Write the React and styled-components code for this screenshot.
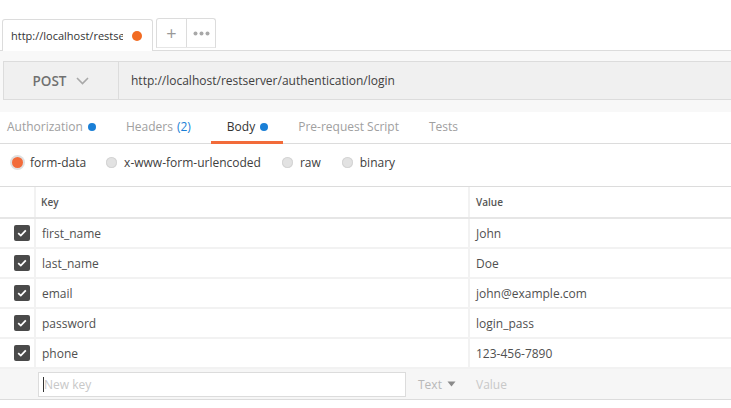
import React from 'react'
import styled, { createGlobalStyle } from 'styled-components'

const Global = createGlobalStyle`
  html, body { margin: 0; padding: 0; background: #fff; }
  body { font-family: "Open Sans", "Liberation Sans", sans-serif; color: #505050; }
  * { box-sizing: border-box; }
`

const Page = styled.div`
  width: 731px;
  height: 408px;
  overflow: hidden;
  background: #fff;
`

const TabStrip = styled.div`
  height: 51px;
  display: flex;
  align-items: flex-end;
  padding-left: 2px;
  gap: 3px;
  border-bottom: 1px solid #dcdcdc;
`

const RequestTab = styled.div`
  width: 151px;
  height: 32px;
  border: 1px solid #dcdcdc;
  border-bottom: none;
  border-radius: 3px 3px 0 0;
  display: flex;
  align-items: center;
  padding: 0 10px 0 8px;
  background: #fff;
  margin-bottom: -1px;
  font-size: 11px;
  color: #333;
`

const TabLabel = styled.span`
  width: 112px;
  overflow: hidden;
  white-space: nowrap;
`

const Dot = styled.span`
  width: ${p => p.size || 9}px;
  height: ${p => p.size || 9}px;
  border-radius: 50%;
  background: ${p => p.color};
  display: inline-block;
  flex-shrink: 0;
  margin-left: ${p => p.gap || 0}px;
`

const TabActions = styled.div`
  display: flex;
  height: 30px;
  margin-bottom: 2px;
  border: 1px solid #dcdcdc;
  border-bottom: 1px solid #e6e6e6;
  border-radius: 3px 3px 0 0;
`

const TabAction = styled.div`
  width: ${p => p.w}px;
  display: flex;
  align-items: center;
  justify-content: center;
  color: #999;
  font-size: 18px;
  & + & { border-left: 1px solid #dcdcdc; }
`

const UrlArea = styled.div`
  background: #f8f8f8;
  padding: 10px 0 12px 3px;
`

const UrlBar = styled.div`
  height: 39px;
  display: flex;
  border: 1px solid #dcdcdc;
  border-right: none;
  background: #f0f0f0;
`

const Method = styled.div`
  width: 115px;
  display: flex;
  align-items: center;
  justify-content: center;
  gap: 10px;
  border-right: 1px solid #dcdcdc;
  font-size: 13.5px;
  font-weight: 600;
  color: #707070;
`

const UrlText = styled.div`
  flex: 1;
  display: flex;
  align-items: center;
  padding-left: 12px;
  font-size: 12px;
  color: #404040;
`

const SubTabs = styled.div`
  height: 32px;
  display: flex;
  align-items: stretch;
  border-bottom: 1px solid #dcdcdc;
`

const SubTab = styled.div`
  display: flex;
  align-items: center;
  padding: 0 ${p => p.pr}px 0 ${p => p.pl}px;
  font-size: 12px;
  color: ${p => (p.active ? '#333' : '#a0a0a0')};
  border-bottom: 3px solid ${p => (p.active ? '#f26b3a' : 'transparent')};
  margin-bottom: -1px;
`

const Count = styled.span`
  color: #1a7fd6;
  margin-left: 4px;
`

const RadioRow = styled.div`
  height: 42px;
  display: flex;
  align-items: center;
  padding: 0 0 5px 12px;
  font-size: 12px;
  color: #404040;
`

const RadioItem = styled.label`
  display: flex;
  align-items: center;
  gap: 7px;
  margin-right: ${p => p.mr}px;
`

const RadioDot = styled.span`
  width: 11px;
  height: 11px;
  border-radius: 50%;
  background: ${p => (p.on ? '#f26b3a' : '#e2e2e2')};
  box-shadow: ${p => (p.on ? '0 0 0 2px #e0e0e0' : 'inset 0 0 0 1px #d4d4d4')};
`

const Table = styled.div`
  border-top: 1px solid #dcdcdc;
`

const Row = styled.div`
  display: grid;
  grid-template-columns: 34px 434px 1fr;
  height: ${p => p.h || 30}px;
  border-bottom: ${p => p.line || '2px solid #f2f2f2'};
  background: ${p => p.bg || '#fff'};
`

const Cell = styled.div`
  display: flex;
  align-items: center;
  padding-left: ${p => p.pl ?? 8}px;
  font-size: ${p => (p.head ? '10px' : '12px')};
  font-weight: ${p => (p.head ? 600 : 400)};
  color: ${p => p.color || '#505050'};
  border-left: ${p => (p.divide ? '2px solid #f2f2f2' : 'none')};
`

const CheckCell = styled.div`
  display: flex;
  align-items: center;
  justify-content: flex-end;
  padding-right: 4px;
`

const Check = styled.span`
  width: 16px;
  height: 16px;
  border-radius: 2px;
  background: #4a4a4a;
  display: flex;
  align-items: center;
  justify-content: center;
`

const KeyInput = styled.div`
  height: 25px;
  width: 368px;
  margin-left: 4px;
  border: 1px solid #dcdcdc;
  background: #fff;
  display: flex;
  align-items: center;
  font-size: 12px;
  color: #c8c8c8;
  padding-left: 4px;
  &::before {
    content: '';
    width: 1px;
    height: 15px;
    background: #333;
  }
`

const TypePicker = styled.span`
  display: flex;
  align-items: center;
  gap: 5px;
  margin-left: 12px;
  color: #b8b8b8;
  font-size: 12px;
`

const rows = [
  ['first_name', 'John'],
  ['last_name', 'Doe'],
  ['email', 'john@example.com'],
  ['password', 'login_pass'],
  ['phone', '123-456-7890'],
]

const Tick = () => (
  <svg width="10" height="8" viewBox="0 0 10 8">
    <path d="M1.2 4.2 L3.8 6.6 L8.8 1.4" stroke="#fff" strokeWidth="1.8" fill="none" />
  </svg>
)

const Chevron = () => (
  <svg width="13" height="8" viewBox="0 0 13 8">
    <path d="M1 1 L6.5 6.5 L12 1" stroke="#a8a8a8" strokeWidth="1.6" fill="none" />
  </svg>
)

const Caret = () => (
  <svg width="9" height="6" viewBox="0 0 9 6">
    <path d="M0.5 0.5 L8.5 0.5 L4.5 5.5 Z" fill="#8a8a8a" />
  </svg>
)

export default function App() {
  return (
    <Page>
      <Global />
      <TabStrip>
        <RequestTab>
          <TabLabel>http://localhost/restserver</TabLabel>
          <Dot color="#f26b22" size={10} gap={9} />
        </RequestTab>
        <TabActions>
          <TabAction w={29}>+</TabAction>
          <TabAction w={29}>
            <svg width="17" height="5" viewBox="0 0 17 5">
              <circle cx="2.5" cy="2.5" r="2" fill="#a8a8a8" />
              <circle cx="8.5" cy="2.5" r="2" fill="#a8a8a8" />
              <circle cx="14.5" cy="2.5" r="2" fill="#a8a8a8" />
            </svg>
          </TabAction>
        </TabActions>
      </TabStrip>

      <UrlArea>
        <UrlBar>
          <Method>POST <Chevron /></Method>
          <UrlText>http://localhost/restserver/authentication/login</UrlText>
        </UrlBar>
      </UrlArea>

      <SubTabs>
        <SubTab pl={7} pr={13}>Authorization <Dot color="#1a7fd6" size={8} gap={5} /></SubTab>
        <SubTab pl={17} pr={20}>Headers<Count>(2)</Count></SubTab>
        <SubTab active pl={16} pr={15}>Body <Dot color="#1a7fd6" size={8} gap={5} /></SubTab>
        <SubTab pl={15} pr={15}>Pre-request Script</SubTab>
        <SubTab pl={15} pr={15}>Tests</SubTab>
      </SubTabs>

      <RadioRow>
        <RadioItem mr={20}><RadioDot on />form-data</RadioItem>
        <RadioItem mr={21}><RadioDot />x-www-form-urlencoded</RadioItem>
        <RadioItem mr={21}><RadioDot />raw</RadioItem>
        <RadioItem mr={0}><RadioDot />binary</RadioItem>
      </RadioRow>

      <Table>
        <Row h={32} line="2px solid #e6e6e6">
          <CheckCell />
          <Cell head divide pl={5} color="#555">Key</Cell>
          <Cell head divide pl={6} color="#555">Value</Cell>
        </Row>
        {rows.map(([k, v]) => (
          <Row key={k}>
            <CheckCell><Check><Tick /></Check></CheckCell>
            <Cell divide pl={6}>{k}</Cell>
            <Cell divide pl={6}>{v}</Cell>
          </Row>
        ))}
        <Row h={31} bg="#f6f6f6" line="1px solid #dcdcdc">
          <CheckCell />
          <Cell pl={0}>
            <KeyInput>New key</KeyInput>
            <TypePicker>Text <Caret /></TypePicker>
          </Cell>
          <Cell pl={8} color="#c8c8c8">Value</Cell>
        </Row>
      </Table>
    </Page>
  )
}
